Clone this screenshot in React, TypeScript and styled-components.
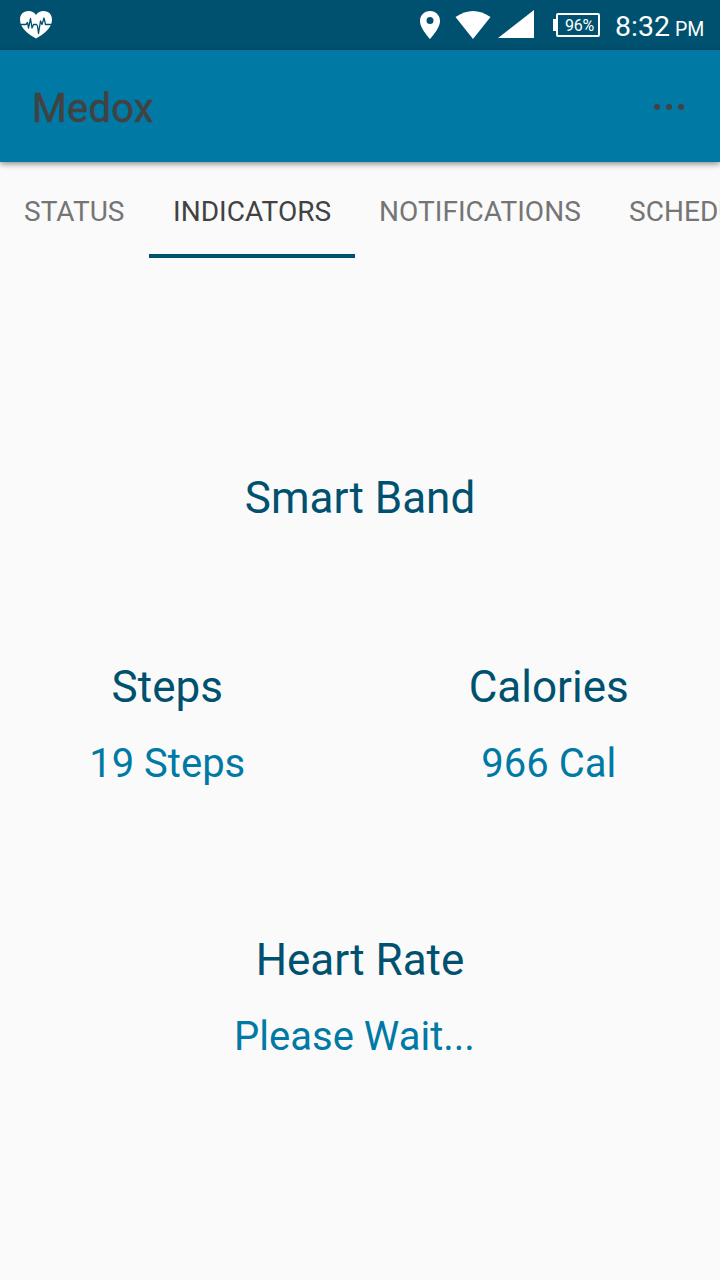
import React from 'react';
import styled, { createGlobalStyle } from 'styled-components';

const Global = createGlobalStyle`
  * { box-sizing: border-box; }
  body { margin: 0; background: #fafafa; font-family: Roboto, sans-serif; }
`;

const Screen = styled.div`
  width: 720px;
  height: 1280px;
  overflow: hidden;
  display: flex;
  flex-direction: column;
  background: #fafafa;
`;

const StatusBar = styled.div`
  flex: none;
  height: 50px;
  padding: 0 16px 0 20px;
  display: flex;
  align-items: center;
  background: #00516f;
  color: #fff;
  svg { display: block; flex: none; }
`;

const StatusIcons = styled.div`
  margin-left: auto;
  display: flex;
  align-items: center;
`;

const BatteryBox = styled.div`
  display: flex;
  align-items: center;
  margin: 0 15px 0 19px;
`;

const BatteryTip = styled.div`
  width: 3px;
  height: 12px;
  background: #fff;
`;

const BatteryBody = styled.div`
  width: 44px;
  height: 24px;
  border: 2px solid #fff;
  border-radius: 2px;
  padding-left: 3px;
  font-size: 16px;
  line-height: 21px;
  letter-spacing: -0.2px;
  text-align: center;
`;

const Clock = styled.div`
  width: 89px;
  font-size: 28.5px;
  line-height: 34px;
  padding-top: 6px;
  white-space: nowrap;
`;

const Meridiem = styled.span`
  font-size: 19.5px;
  margin-left: 5px;
`;

const AppBar = styled.header`
  flex: none;
  height: 112px;
  padding: 2px 35px 0 32px;
  display: flex;
  align-items: center;
  justify-content: space-between;
  background: #0079a5;
  box-shadow: 0 2px 6px rgba(0, 0, 0, 0.45);
  z-index: 1;
`;

const Title = styled.h1`
  margin: 0;
  padding-top: 4px;
  font-size: 40px;
  line-height: 48px;
  font-weight: 400;
  letter-spacing: 0.15px;
  -webkit-text-stroke: 0.5px #424242;
  color: #424242;
`;

const Tabs = styled.nav`
  flex: none;
  display: flex;
  height: 96px;
`;

const Tab = styled.div<{ $width: number; $active?: boolean }>`
  flex: none;
  width: ${p => p.$width}px;
  padding: 5px 0 0 24px;
  line-height: 90px;
  font-size: 28px;
  letter-spacing: 0.05px;
  white-space: nowrap;
  color: ${p => (p.$active ? '#424242' : '#757575')};
  border-bottom: 4px solid ${p => (p.$active ? '#00516f' : 'transparent')};
`;

const Content = styled.main`
  display: flex;
  flex-direction: column;
`;

const Section = styled.div<{ $top: number }>`
  display: grid;
  grid-auto-flow: column;
  justify-content: center;
  margin-top: ${p => p.$top}px;
`;

const Metrics = styled.div`
  display: flex;
  margin-top: 137px;
`;

const Metric = styled.section<{ $width: number; $shift?: number }>`
  width: ${p => p.$width}px;
  margin-left: ${p => p.$shift ?? 0}px;
  text-align: center;
`;

const Heading = styled.h2`
  margin: 0;
  font-size: 44px;
  line-height: 52px;
  font-weight: 400;
  color: #00516f;
`;

const Value = styled.div<{ $inset?: number }>`
  margin-top: 27px;
  padding-right: ${p => p.$inset ?? 0}px;
  font-size: 40px;
  line-height: 48px;
  color: #0079a5;
`;

export default function App() {
  return (
    <Screen>
      <Global />
      <StatusBar>
        <svg width="32" height="30" viewBox="20 10 32 30">
          <path d="M36 38.500C30 35 20 29 20 19.500C20 10 32 8.500 36 15C40 8.500 52 10 52 19.500C52 29 42 35 36 38.500Z" fill="#fff" />
          <path d="M21 24.500H26L27.500 22.500L28.500 28L30.500 18.500L32 28L33.500 24.500H36.500L37.500 26L38.500 33.500L40.500 21L42 24.500L44 18L45.500 24.500H52" fill="none" stroke="#00516f" strokeWidth="1.3" strokeLinejoin="round" />
        </svg>
        <StatusIcons>
          <svg width="114" height="30" viewBox="420 10 114 30">
            <path fillRule="evenodd" d="M430 11C424 11 420 15.500 420 21C420 28.500 430 39 430 39S440 28.500 440 21C440 15.500 436 11 430 11ZM430 17A3.500 3.500 0 1 1 430 24A3.500 3.500 0 0 1 430 17Z" fill="#fff" />
            <path d="M455.500 17Q473 5 490.500 17L473 39Z" fill="#fff" />
            <path d="M534 10V38H498Z" fill="#fff" />
          </svg>
          <BatteryBox><BatteryTip /><BatteryBody>96%</BatteryBody></BatteryBox>
          <Clock>8:32<Meridiem>PM</Meridiem></Clock>
        </StatusIcons>
      </StatusBar>
      <AppBar>
        <Title>Medox</Title>
        <svg width="32" height="8" viewBox="0 0 32 8" fill="#424242">
          <circle cx="4" cy="4" r="3" /><circle cx="16" cy="4" r="3" /><circle cx="28" cy="4" r="3" />
        </svg>
      </AppBar>
      <Tabs>
        <Tab $width={149}>STATUS</Tab>
        <Tab $width={206} $active>INDICATORS</Tab>
        <Tab $width={250}>NOTIFICATIONS</Tab>
        <Tab $width={184}>SCHEDULE</Tab>
      </Tabs>
      <Content>
        <Section $top={214}><Heading>Smart Band</Heading></Section>
        <Metrics>
          <Metric $width={334.5}><Heading>Steps</Heading><Value>19 Steps</Value></Metric>
          <Metric $width={334.5} $shift={47}><Heading>Calories</Heading><Value>966 Cal</Value></Metric>
        </Metrics>
        <Section $top={146}>
          <Metric $width={336}><Heading>Heart Rate</Heading><Value $inset={11}>Please Wait...</Value></Metric>
        </Section>
      </Content>
    </Screen>
  );
}
